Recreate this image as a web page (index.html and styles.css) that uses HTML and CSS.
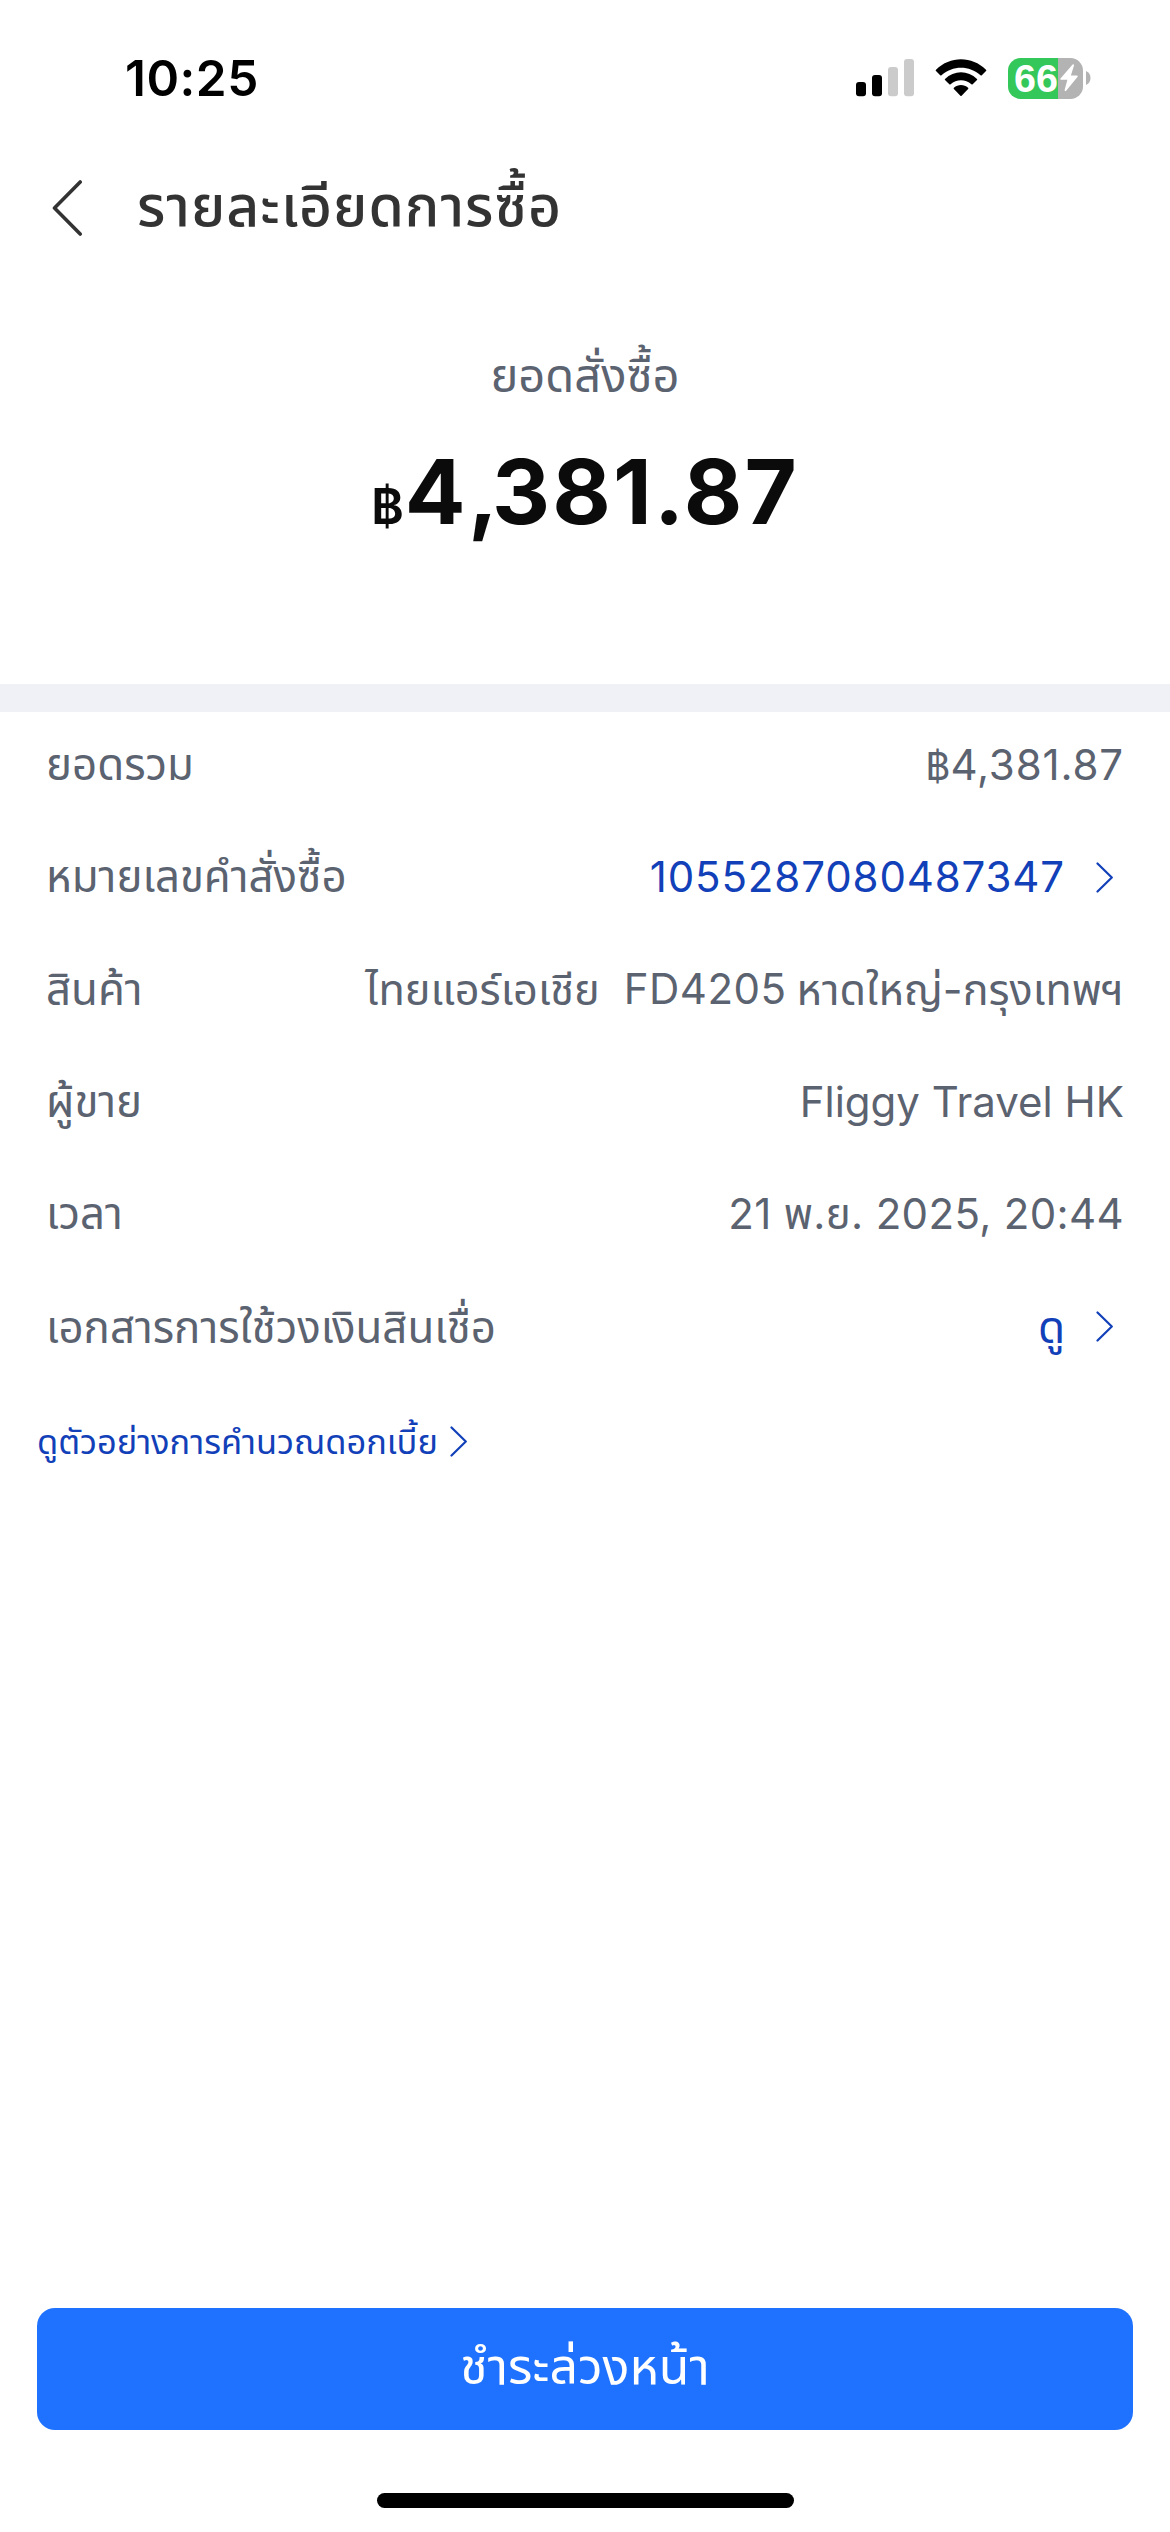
FILE: index.html
```html
<!DOCTYPE html>
<html lang="th">
<head>
<meta charset="utf-8">
<title>รายละเอียดการซื้อ</title>
<link rel="stylesheet" href="styles.css">
</head>
<body>
<div class="status-bar">
  <span class="time">10:25</span>
  <div class="status-icons">
    <svg class="signal" width="58" height="38" viewBox="0 0 58 38">
      <rect x="0" y="23" width="10" height="14.3" rx="3"/>
      <rect x="16" y="16" width="10" height="21.3" rx="3"/>
      <rect x="32" y="8" width="10" height="29.3" rx="3" fill="#cbcbcb"/>
      <rect x="48" y="0" width="10" height="37.3" rx="3" fill="#cbcbcb"/>
    </svg>
    <svg class="wifi" width="52" height="38" viewBox="0 0 52 38">
      <path d="M1 10.8Q0.4 11.4 1 12L5.200 16.3Q5.800 16.900 6.500 16.300C17.500 6.100 34.500 6.100 45.500 16.300Q46.200 16.900 46.800 16.300L51 12Q51.600 11.400 51 10.800C37.100-3.200 14.900-3.200 1 10.800Z"/>
      <path d="M10 19.900Q9.500 20.500 10 21.100L14.300 25.300Q14.900 25.900 15.600 25.300C21.500 20 30.500 20 36.400 25.300Q37.100 25.900 37.700 25.300L42 21.100Q42.500 20.500 42 19.900C33 11 19 11 10 19.900Z"/>
      <path d="M18.900 28.800Q18.300 29.400 18.900 30L25.400 36.800Q26 37.400 26.600 36.800L33.100 30Q33.700 29.400 33.100 28.800C29 25.100 23 25.100 18.900 28.800Z"/>
    </svg>
    <div class="battery">
      <div class="battery-body"><span class="battery-level">66</span>
        <svg class="bolt" width="18" height="28" viewBox="0 0 18 28"><path d="M12.600.6 .5 14.600Q0 15.600 1.100 15.700H7.400L4.600 26Q4.700 27.800 6.200 26.800L17.600 12.700Q18 11.600 17 11.500H10.900L14 1.600Q14-.2 12.600.6Z"/></svg>
      </div>
      <svg width="5" height="14" viewBox="0 0 5 14"><path d="M0 0Q4.500 2 4.500 7T0 14Z" fill="#b3b3b3"/></svg>
    </div>
  </div>
</div>

<header class="header">
  <svg class="back" width="32" height="56" viewBox="0 0 32 56"><path d="M29.200 2 3.500 28 29.200 54"/></svg>
  <h1 class="title">รายละเอียดการซื้อ</h1>
</header>

<section class="summary">
  <div class="summary-label">ยอดสั่งซื้อ</div>
  <div class="amount"><span class="baht">฿</span>4<span class="comma">,</span>381.87</div>
</section>

<main class="details">
  <div class="row"><span>ยอดรวม</span><span class="value total"><span class="baht-small">฿</span>4,381.87</span></div>
  <div class="row"><span>หมายเลขคำสั่งซื้อ</span><a class="value link"><span class="order-no">1055287080487347</span><svg class="chevron" width="18" height="31" viewBox="0 0 18 31"><path d="M1.500 1.500 15.800 15.500 1.500 29.500"/></svg></a></div>
  <div class="row"><span>สินค้า</span><span class="value product"><span>ไทยแอร์เอเชีย</span><span class="flight">FD4205</span><span class="route">หาดใหญ่-กรุงเทพฯ</span></span></div>
  <div class="row"><span>ผู้ขาย</span><span class="value">Fliggy Travel HK</span></div>
  <div class="row"><span>เวลา</span><span class="value date">21 พ.ย. 2025, 20:44</span></div>
  <div class="row"><span>เอกสารการใช้วงเงินสินเชื่อ</span><a class="value link"><span class="view">ดู</span><svg class="chevron" width="18" height="31" viewBox="0 0 18 31"><path d="M1.500 1.500 15.800 15.500 1.500 29.500"/></svg></a></div>
</main>

<a class="example link">ดูตัวอย่างการคำนวณดอกเบี้ย<svg class="chevron" width="18" height="31" viewBox="0 0 18 31"><path d="M1.500 1.500 15.800 15.500 1.500 29.500"/></svg></a>

<footer class="footer">
  <button class="pay">ชำระล่วงหน้า</button>
  <div class="home-indicator"></div>
</footer>
</body>
</html>
```
FILE: styles.css
```css
* { box-sizing: border-box; }
body {
  margin: 0;
  width: 1170px;
  height: 2532px;
  display: flex;
  flex-direction: column;
  background: #fff;
  color: #5b6270;
  font-family: Inter, "Noto Sans Thai", "Noto Sans", sans-serif;
}
svg { display: block; flex: none; }

.status-bar {
  height: 156px;
  padding: 0 79px 0 125px;
  display: flex;
  align-items: center;
  justify-content: space-between;
  color: #000;
}
.time { font-size: 49.5px; line-height: 60px; font-weight: 600; letter-spacing: .5px; }
.status-icons { display: flex; align-items: center; }
.wifi { margin: 0 21px 0 21px; }
.battery { display: flex; align-items: center; gap: 3px; }
.battery-body {
  width: 75px;
  height: 41px;
  border-radius: 12.5px;
  background: linear-gradient(to right, #34c759 50px, #b3b3b3 50px);
  display: flex;
  align-items: center;
  padding-left: 6px;
}
.battery-level { width: 46px; font: 700 39.5px/41px "Liberation Sans", sans-serif; color: #fff; }
.bolt { fill: #fff; }

.header { margin-top: 9.5px; height: 80px; padding-left: 51px; display: flex; align-items: center; }
.back { margin-top: 5px; fill: none; stroke: #333; stroke-width: 3.6; stroke-linecap: round; stroke-linejoin: round; }
.title { margin: 0 0 0 54px; font-size: 57px; line-height: 80px; font-weight: 500; letter-spacing: 1px; color: #333; }

.summary { height: 466.5px; padding-top: 99.5px; border-bottom: 28px solid #f0f1f6; text-align: center; }
.summary-label { font-size: 47px; line-height: 60px; }
.amount { margin-top: 32px; font-size: 90px; line-height: 110px; font-weight: 700; letter-spacing: 2.2px; color: #0b0b0b; }
.comma { letter-spacing: -6px; }
.baht { margin-right: 1px; font-size: 50px; line-height: 0; font-weight: 600; letter-spacing: 0; }

.details { padding: 22.7px 46px 0 46px; display: flex; flex-direction: column; gap: 52.4px; }
.row { height: 60px; display: flex; justify-content: space-between; align-items: baseline; font-size: 43.8px; line-height: 60px; }
.value { font-size: 42px; }
.total { letter-spacing: .87px; }
.baht-small { font-size: 38.5px; line-height: 0; letter-spacing: 0; }
.link { color: #1140b8; }
.row .link { display: flex; align-items: center; padding-right: 10px; }
.row .chevron { margin-left: 31px; }
.chevron { fill: none; stroke: #1140b8; stroke-width: 2.2; stroke-linecap: round; stroke-linejoin: round; }
.order-no { letter-spacing: .87px; }
.product { display: flex; font-size: 43.3px; }
.flight { margin: 0 10px 0 24px; font-size: 42px; letter-spacing: .5px; }
.route { font-size: 43.1px; }
.date { letter-spacing: .35px; }
.view { font-size: 44px; }

.example { margin: 55.300px 0 0 37px; display: flex; align-items: center; font-size: 34.4px; line-height: 60px; }
.example .chevron { margin-left: 12px; }

.footer { margin-top: auto; padding: 0 37px 24px; display: flex; flex-direction: column; align-items: center; gap: 63px; }
.pay {
  width: 100%;
  height: 122px;
  border: 0;
  border-radius: 18px;
  padding: 0 0 6px;
  background: #1f72ff;
  color: #fff;
  font: 400 50px/60px Inter, "Noto Sans Thai", "Noto Sans", sans-serif;
}
.home-indicator { width: 417px; height: 15px; border-radius: 8px; background: #000; }
```
